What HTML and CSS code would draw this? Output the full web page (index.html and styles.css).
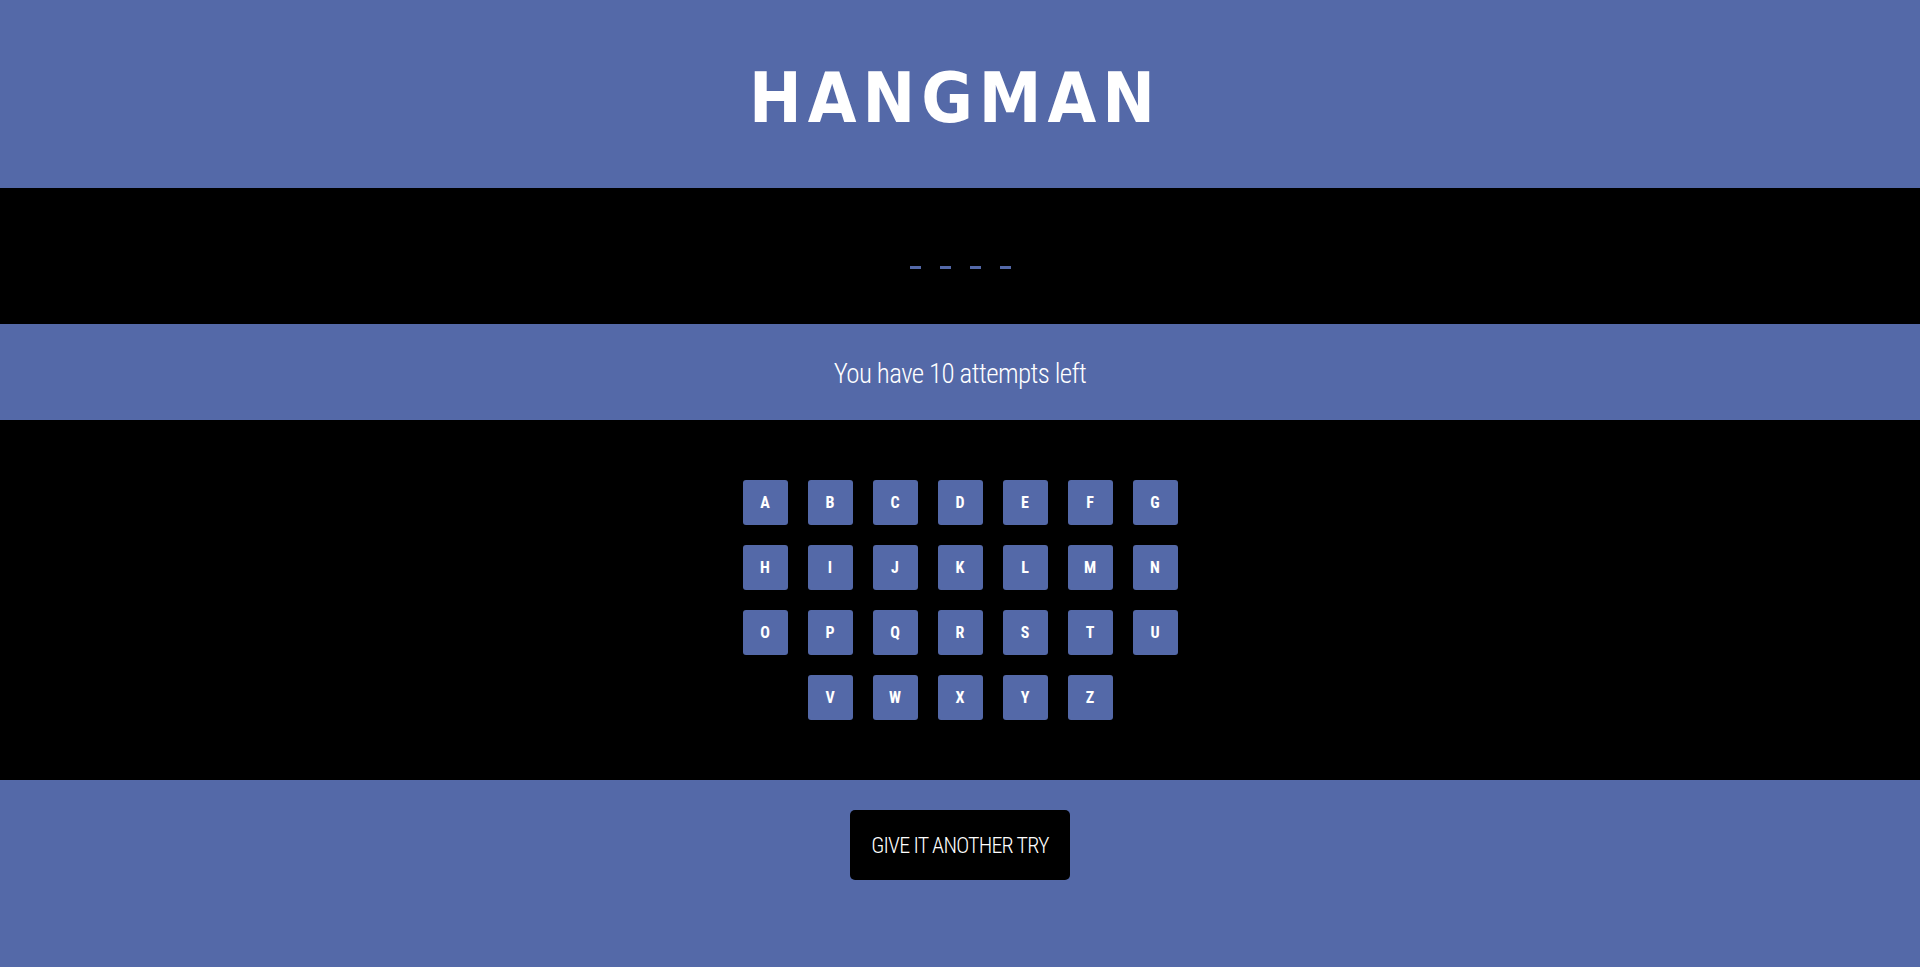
FILE: index.html
```html
<!DOCTYPE html>
<html lang="en">
<head>
<meta charset="utf-8">
<title>Hangman</title>
<link rel="stylesheet" href="styles.css">
</head>
<body>
<header class="header">
  <h1 class="title">HANGMAN</h1>
</header>
<section class="word-band">
  <div class="word">
    <span class="slot"></span>
    <span class="slot"></span>
    <span class="slot"></span>
    <span class="slot"></span>
  </div>
</section>
<section class="status-band">
  <p class="status">You have 10 attempts left</p>
</section>
<section class="keys-band">
  <div class="keys">
    <button class="key">A</button>
    <button class="key">B</button>
    <button class="key">C</button>
    <button class="key">D</button>
    <button class="key">E</button>
    <button class="key">F</button>
    <button class="key">G</button>
    <button class="key">H</button>
    <button class="key">I</button>
    <button class="key">J</button>
    <button class="key">K</button>
    <button class="key">L</button>
    <button class="key">M</button>
    <button class="key">N</button>
    <button class="key">O</button>
    <button class="key">P</button>
    <button class="key">Q</button>
    <button class="key">R</button>
    <button class="key">S</button>
    <button class="key">T</button>
    <button class="key">U</button>
    <button class="key">V</button>
    <button class="key">W</button>
    <button class="key">X</button>
    <button class="key">Y</button>
    <button class="key">Z</button>
  </div>
</section>
<section class="retry-band">
  <button class="retry">GIVE IT ANOTHER TRY</button>
</section>
</body>
</html>
```
FILE: styles.css
```css
* { box-sizing: border-box; }
html, body { margin: 0; padding: 0; }
body {
  background: #5469a8;
  color: #fff;
  font-family: "Roboto", sans-serif;
  font-stretch: condensed;
  height: 967px;
  overflow: hidden;
}
.header {
  height: 188px;
  background: #5469a8;
  display: flex;
  align-items: center;
  justify-content: center;
}
.title {
  margin: 0;
  font-family: "DejaVu Sans", sans-serif;
  font-stretch: condensed;
  font-weight: 700;
  font-size: 70px;
  line-height: 1;
  letter-spacing: 6px;
  padding-right: 10px;
  padding-top: 8px;
}
.word-band {
  height: 136px;
  background: #000;
  display: flex;
  align-items: center;
  justify-content: center;
}
.word {
  display: flex;
  gap: 19px;
  padding-top: 22px;
}
.slot {
  width: 11px;
  height: 3px;
  background: #5469a8;
}
.status-band {
  height: 96px;
  display: flex;
  align-items: center;
  justify-content: center;
}
.status {
  margin: 0;
  font-family: "Roboto", sans-serif;
  font-stretch: condensed;
  font-weight: 300;
  font-size: 27px;
  letter-spacing: -0.6px;
  line-height: 1;
  padding-top: 4px;
}
.keys-band {
  height: 360px;
  background: #000;
  padding-top: 60px;
  display: flex;
  justify-content: center;
}
.keys {
  width: 435px;
  display: flex;
  flex-wrap: wrap;
  justify-content: center;
  gap: 20px;
  align-content: flex-start;
}
.key {
  width: 45px;
  height: 45px;
  border: none;
  border-radius: 3px;
  background: #5469a8;
  color: #fff;
  font-family: "Roboto", sans-serif;
  font-stretch: condensed;
  font-weight: 700;
  font-size: 16px;
  padding: 0;
  display: flex;
  align-items: center;
  justify-content: center;
}
.retry-band {
  display: flex;
  justify-content: center;
  padding-top: 30px;
}
.retry {
  width: 220px;
  height: 70px;
  background: #000;
  color: #fff;
  border: none;
  border-radius: 5px;
  font-family: "Roboto", sans-serif;
  font-stretch: condensed;
  font-weight: 300;
  font-size: 22px;
  letter-spacing: -0.8px;
  white-space: nowrap;
  padding: 0;
}
```
